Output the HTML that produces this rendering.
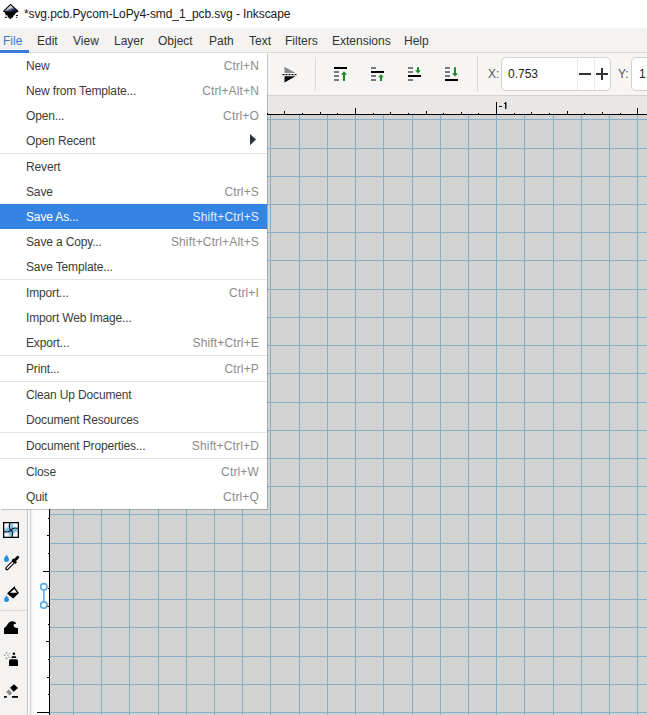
<!DOCTYPE html>
<html><head><meta charset="utf-8">
<style>
*{margin:0;padding:0;box-sizing:border-box}
html,body{width:647px;height:715px;overflow:hidden;background:#fff;font-family:"Liberation Sans",sans-serif;font-size:12px;color:#2e3436}
.a{position:absolute}
.t{position:absolute;white-space:nowrap;line-height:14px}
#title{left:0;top:0;width:647px;height:28px;background:#fff}
#menubar{left:0;top:28px;width:647px;height:25px;background:#f4f3f2;border-bottom:1px solid #dcdad7}
#toolbar{left:0;top:53px;width:647px;height:43px;background:#f6f5f4;border-bottom:1px solid #d6d3cf}
#hruler{left:50px;top:96px;width:597px;height:19px;background:#e8e7e5}
#toolbox{left:0;top:95px;width:27px;height:620px;background:#f4f3f2}
#vruler{left:30px;top:95px;width:20px;height:620px;background:#fdfdfd}
#canvas{left:50px;top:115px;width:597px;height:600px;background:#d3d2d3}
#menu{left:0;top:53px;width:267px;height:456px;background:#fff;box-shadow:1px 1px 0 rgba(0,0,0,.2)}
.mi{position:absolute;left:0;width:267px;height:25px}
.mi .l{position:absolute;left:26px;top:6px;white-space:nowrap;line-height:14px;letter-spacing:-0.15px;color:#3c3c3c}
.mi .r{position:absolute;right:8px;top:6px;white-space:nowrap;line-height:14px;color:#8c8c8c;letter-spacing:0.15px}
.sep{position:absolute;left:0;width:267px;height:1px;background:#e4e4e4}
.hl{background:#3584e4}
.hl .l{color:#fff}.hl .r{color:#e2ecfa}
</style></head><body>
<div id="title" class="a">
  <svg class="a" style="left:0;top:0" width="24" height="24" viewBox="0 0 24 24">
    <defs><linearGradient id="lg" x1="0.15" y1="0.1" x2="0.75" y2="0.95"><stop offset="0" stop-color="#fff"/><stop offset="0.4" stop-color="#c4c4d4"/><stop offset="0.7" stop-color="#2a2a58"/><stop offset="1" stop-color="#101030"/></linearGradient></defs>
    <path d="M10.5 3.8 L18.8 11.3 L15.5 13.2 L6 13.2 L2.8 11.3 Z" fill="#000"/>
    <path d="M10.5 5.3 L17 11.1 L10.5 12.3 L4.6 11.1 Z" fill="url(#lg)"/>
    <path d="M5 13 L15.5 13 L14.6 15.2 L13.4 15.6 L13 17.4 L11.6 17.8 L11 19 L9.8 19 L9.2 17.8 L7.8 17.4 L7.6 15.6 L5.6 15.2 Z" fill="#000"/>
    <rect x="4.8" y="16.8" width="2" height="1.1" fill="#111"/>
    <rect x="16" y="15" width="2" height="1" fill="#111"/>
    <rect x="16" y="16.9" width="1.2" height="1" fill="#222"/>
  </svg>
  <div class="t" style="left:24px;top:7px;color:#1a1a1a;letter-spacing:-0.1px">*svg.pcb.Pycom-LoPy4-smd_1_pcb.svg - Inkscape</div>
</div>
<div id="menubar" class="a">
  <div class="a" style="left:0;top:22px;width:29px;height:3px;background:#3a7bd5"></div>
  <div class="t" style="left:3px;top:6px;color:#3b78c4">File</div>
  <div class="t" style="left:37px;top:6px">Edit</div>
  <div class="t" style="left:73px;top:6px">View</div>
  <div class="t" style="left:114px;top:6px">Layer</div>
  <div class="t" style="left:158px;top:6px">Object</div>
  <div class="t" style="left:209px;top:6px">Path</div>
  <div class="t" style="left:249px;top:6px">Text</div>
  <div class="t" style="left:285px;top:6px">Filters</div>
  <div class="t" style="left:332px;top:6px">Extensions</div>
  <div class="t" style="left:404px;top:6px">Help</div>
</div>
<div id="toolbar" class="a">
  <svg class="a" style="left:281px;top:13px" width="18" height="18" viewBox="0 0 18 18">
    <path d="M3.5 0.8 L14.5 7 L3.5 7 Z" fill="#8c8c8c"/>
    <rect x="1.5" y="8" width="2" height="1.2" fill="#000"/><rect x="4.5" y="8" width="2" height="1.2" fill="#000"/><rect x="7.5" y="8" width="2" height="1.2" fill="#000"/><rect x="10.5" y="8" width="2" height="1.2" fill="#000"/><rect x="13.5" y="8" width="2" height="1.2" fill="#000"/>
    <path d="M3.5 10.2 L14.5 10.2 L3.5 16.4 Z" fill="#000"/>
  </svg>
  <div class="a" style="left:315px;top:4px;width:1px;height:34px;background:#dcdad6"></div>
  <svg class="a" style="left:333px;top:13px" width="16" height="16" viewBox="0 0 16 16" shape-rendering="crispEdges">
    <rect x="1" y="1" width="13" height="2" fill="#000"/>
    <rect x="1" y="5" width="5" height="2" fill="#7a7a7a"/><rect x="1" y="9" width="5" height="2" fill="#7a7a7a"/><rect x="1" y="13" width="5" height="2" fill="#7a7a7a"/>
    <path d="M11 5.2 L14 8.8 L12 8.8 L12 15 L10 15 L10 8.8 L8 8.8 Z" fill="#1a8a2a" shape-rendering="auto"/>
  </svg>
  <svg class="a" style="left:370px;top:13px" width="16" height="16" viewBox="0 0 16 16" shape-rendering="crispEdges">
    <rect x="1" y="1" width="5" height="2" fill="#7a7a7a"/>
    <rect x="1" y="5" width="13" height="2" fill="#000"/>
    <rect x="1" y="9" width="5" height="2" fill="#7a7a7a"/><rect x="1" y="13" width="5" height="2" fill="#7a7a7a"/>
    <path d="M11 8.2 L13.8 11.2 L12 11.2 L12 15 L10 15 L10 11.2 L8.2 11.2 Z" fill="#1a8a2a" shape-rendering="auto"/>
  </svg>
  <svg class="a" style="left:407px;top:13px" width="16" height="16" viewBox="0 0 16 16" shape-rendering="crispEdges">
    <rect x="1" y="1" width="5" height="2" fill="#7a7a7a"/><rect x="1" y="5" width="5" height="2" fill="#7a7a7a"/>
    <rect x="1" y="9" width="13" height="2" fill="#000"/>
    <rect x="1" y="13" width="5" height="2" fill="#7a7a7a"/>
    <path d="M10 1.2 L12 1.2 L12 4.2 L13.8 4.2 L11 7.4 L8.2 4.2 L10 4.2 Z" fill="#1a8a2a" shape-rendering="auto"/>
  </svg>
  <svg class="a" style="left:444px;top:13px" width="16" height="16" viewBox="0 0 16 16" shape-rendering="crispEdges">
    <rect x="1" y="1" width="5" height="2" fill="#7a7a7a"/><rect x="1" y="5" width="5" height="2" fill="#7a7a7a"/><rect x="1" y="9" width="5" height="2" fill="#7a7a7a"/>
    <rect x="1" y="13" width="13" height="2" fill="#000"/>
    <path d="M10 1.2 L12 1.2 L12 7.2 L14 7.2 L11 10.6 L8 7.2 L10 7.2 Z" fill="#1a8a2a" shape-rendering="auto"/>
  </svg>
  <div class="a" style="left:477px;top:3px;width:1px;height:36px;background:#dcdad6"></div>
  <div class="t" style="left:488px;top:14px;color:#555">X:</div>
  <div class="a" style="left:501px;top:4px;width:110px;height:34px;background:#fff;border:1px solid #d5d2ce;border-radius:5px"></div>
  <div class="a" style="left:577px;top:5px;width:1px;height:32px;background:#ebeae8"></div>
  <div class="a" style="left:594px;top:5px;width:1px;height:32px;background:#ebeae8"></div>
  <div class="t" style="left:508px;top:14px;color:#222">0.753</div>
  <div class="a" style="left:579px;top:20px;width:12px;height:2px;background:#333"></div>
  <div class="a" style="left:596px;top:20px;width:12px;height:2px;background:#333"></div>
  <div class="a" style="left:601px;top:15px;width:2px;height:12px;background:#333"></div>
  <div class="t" style="left:618px;top:14px;color:#555">Y:</div>
  <div class="a" style="left:631px;top:4px;width:40px;height:34px;background:#fff;border:1px solid #d5d2ce;border-radius:5px"></div>
  <div class="t" style="left:639px;top:14px;color:#222">1.</div>
</div>
<div id="hruler" class="a"></div>
<svg class="a" style="left:50px;top:95px" width="597" height="20" shape-rendering="crispEdges"><g fill="#000"><rect x="5" y="18" width="1" height="1"/><rect x="23" y="13" width="1" height="6"/><rect x="40" y="18" width="1" height="1"/><rect x="58" y="17" width="1" height="2"/><rect x="75" y="18" width="1" height="1"/><rect x="93" y="16" width="1" height="3"/><rect x="111" y="18" width="1" height="1"/><rect x="128" y="17" width="1" height="2"/><rect x="146" y="18" width="1" height="1"/><rect x="164" y="7" width="1" height="12"/><rect x="181" y="18" width="1" height="1"/><rect x="199" y="17" width="1" height="2"/><rect x="217" y="18" width="1" height="1"/><rect x="234" y="16" width="1" height="3"/><rect x="252" y="18" width="1" height="1"/><rect x="270" y="17" width="1" height="2"/><rect x="287" y="18" width="1" height="1"/><rect x="305" y="13" width="1" height="6"/><rect x="323" y="18" width="1" height="1"/><rect x="340" y="17" width="1" height="2"/><rect x="358" y="18" width="1" height="1"/><rect x="376" y="16" width="1" height="3"/><rect x="393" y="18" width="1" height="1"/><rect x="411" y="17" width="1" height="2"/><rect x="428" y="18" width="1" height="1"/><rect x="446" y="7" width="1" height="12"/><rect x="464" y="18" width="1" height="1"/><rect x="481" y="17" width="1" height="2"/><rect x="499" y="18" width="1" height="1"/><rect x="517" y="16" width="1" height="3"/><rect x="534" y="18" width="1" height="1"/><rect x="552" y="17" width="1" height="2"/><rect x="570" y="18" width="1" height="1"/><rect x="587" y="13" width="1" height="6"/><rect x="0" y="19" width="597" height="1"/></g></svg>
<div id="toolbox" class="a">
  <div class="a" style="left:0;top:515px;width:27px;height:1px;background:#dedcd9"></div>
  <svg class="a" style="left:3px;top:427px" width="16" height="16" viewBox="0 0 16 16">
    <defs><filter id="bl" x="-0.5" y="-0.5" width="2" height="2"><feGaussianBlur stdDeviation="0.9"/></filter></defs>
    <rect x="0.65" y="0.65" width="14.7" height="14.7" fill="#fff"/>
    <g fill="#3e9fd6" opacity="0.85" filter="url(#bl)">
      <path d="M7 1.5 C6 4, 6.3 6.5, 8 7.8 L10.5 5.5 C10 3.5, 9.5 2, 9 1.5 Z"/>
      <path d="M14.5 6.8 C12 5.8, 9.5 6.2, 8 7.8 L10.5 10.5 C12.5 10, 14 9.5, 14.5 9 Z"/>
      <path d="M8.6 14.5 C9.8 12, 9.6 9.5, 8 7.8 L5.5 10.5 C6 12.5, 6.5 14, 7 14.5 Z"/>
      <path d="M1.5 9.2 C4 10.2, 6.5 9.8, 8 7.8 L5.5 5.5 C3.5 6, 2 6.5, 1.5 7 Z"/>
    </g>
    <rect x="0.65" y="0.65" width="14.7" height="14.7" fill="none" stroke="#000" stroke-width="1.3"/>
    <g fill="none" stroke="#06121e" stroke-width="1.1">
      <path d="M7 1 C5.8 4, 6.5 7, 8 8"/><path d="M15 6.5 C12 5.5, 9.3 6.5, 8 8"/>
      <path d="M8.8 15 C10 12, 9.6 9.3, 8 8"/><path d="M1 9.5 C4 10.5, 6.8 9.6, 8 8"/>
    </g>
  </svg>
  <svg class="a" style="left:0;top:455px" width="24" height="25" viewBox="0 0 24 25">
    <path d="M6.5 4.8 C7.3 6.3, 9 7.6, 9 9.6 A2.5 2.5 0 0 1 4 9.6 C4 7.6, 5.7 6.3, 6.5 4.8 Z" fill="#1e90dc"/>
    <path d="M14.6 10.4 L17.8 7.2" stroke="#000" stroke-width="2.8" stroke-linecap="round"/>
    <path d="M12.4 9.4 L16.2 13.2" stroke="#000" stroke-width="2.4"/>
    <path d="M13.4 12 L7 18.4" stroke="#000" stroke-width="3.6" stroke-linecap="round"/>
    <path d="M12.6 12.8 L7.2 18.2" stroke="#fff" stroke-width="1.5" stroke-linecap="round"/>
  </svg>
  <svg class="a" style="left:0;top:485px" width="24" height="26" viewBox="0 0 24 26">
    <path d="M7 13.5 L14.2 6.6 L18.9 12.9 L13.2 18.4 Z" fill="#000"/>
    <path d="M14.2 5.8 L15 6.5 L14 7.5 Z" fill="#000"/>
    <path d="M10.2 12.7 L14.2 8.9 L17.1 12.7 Z" fill="#fff"/>
    <path d="M6.5 15.2 C7.3 16.8, 9 18, 9 19.6 A2.5 2.5 0 0 1 4 19.6 C4 18, 5.7 16.8, 6.5 15.2 Z" fill="#1e90dc"/>
  </svg>
  <svg class="a" style="left:0;top:519px" width="24" height="26" viewBox="0 0 24 26">
    <path d="M4 20 L4 14 C6 13.5, 7 11, 8.5 9 C10 7.2, 13 6.8, 15 8 C16 8.6, 16.3 9.5, 15.8 10 C14.5 9.5, 13.3 10.5, 13.7 12 C14 13.5, 16 14, 18 14 L18 20 Z" fill="#000"/>
  </svg>
  <svg class="a" style="left:0;top:551px" width="24" height="26" viewBox="0 0 24 26">
    <path d="M9 20 L9 14.8 Q9 13.2 10.6 13.2 L16.4 13.2 Q18 13.2 18 14.8 L18 20 Z" fill="#000"/>
    <path d="M11.3 12 L11.8 10.2 L15.8 10.2 L16.4 12 Z" fill="#000"/>
    <circle cx="13.9" cy="7.8" r="1.3" fill="#000"/>
    <g fill="#888"><circle cx="6.5" cy="6.8" r="0.8"/><circle cx="4.8" cy="9.3" r="0.8"/><circle cx="6.5" cy="12.3" r="0.9"/><circle cx="9.5" cy="7.5" r="0.6"/><circle cx="8" cy="9.2" r="0.6"/><circle cx="9" cy="11.2" r="0.6"/></g>
  </svg>
  <svg class="a" style="left:0;top:583px" width="24" height="26" viewBox="0 0 24 26">
    <path d="M14 6.2 L18 10 L13.6 13.8 L10 9.8 Z" fill="#000"/>
    <path d="M8.8 11.5 L12.2 15 L9.6 17.5 L6.2 14 Z" fill="#8a8a8a"/>
    <rect x="4" y="18" width="2.8" height="1.8" fill="#000"/>
    <rect x="12" y="18" width="6" height="1.8" fill="#000"/>
  </svg>
</div>
<svg class="a" style="left:498px;top:101px" width="12" height="10" shape-rendering="crispEdges">
  <rect x="1" y="5" width="3" height="1" fill="#111"/><rect x="7" y="1" width="1" height="7" fill="#111"/><rect x="8" y="1" width="1" height="7" fill="#888"/><rect x="6" y="2" width="1" height="1" fill="#222"/>
</svg>
<div id="vruler" class="a"></div>
<div class="a" style="left:27px;top:95px;width:1px;height:620px;background:#cac9c8"></div>
<div class="a" style="left:28px;top:95px;width:2px;height:620px;background:#f8f7f6"></div>
<div class="a" style="left:30px;top:95px;width:1px;height:620px;background:#d8d8d8"></div>
<div class="a" style="left:31px;top:95px;width:1px;height:620px;background:#eeeeee"></div>
<div class="a" style="left:32px;top:95px;width:1px;height:620px;background:#f8f8f8"></div>
<svg class="a" style="left:31px;top:96px" width="19" height="619" shape-rendering="crispEdges"><g fill="#000"><rect x="6" y="616" width="12" height="1"/><rect x="17" y="598" width="1" height="1"/><rect x="16" y="581" width="2" height="1"/><rect x="17" y="563" width="1" height="1"/><rect x="15" y="545" width="3" height="1"/><rect x="17" y="528" width="1" height="1"/><rect x="16" y="510" width="2" height="1"/><rect x="17" y="492" width="1" height="1"/><rect x="12" y="475" width="6" height="1"/><rect x="17" y="457" width="1" height="1"/><rect x="16" y="439" width="2" height="1"/><rect x="17" y="422" width="1" height="1"/><rect x="15" y="404" width="3" height="1"/><rect x="17" y="386" width="1" height="1"/><rect x="16" y="369" width="2" height="1"/><rect x="17" y="351" width="1" height="1"/><rect x="6" y="333" width="12" height="1"/><rect x="17" y="316" width="1" height="1"/><rect x="16" y="298" width="2" height="1"/><rect x="17" y="280" width="1" height="1"/><rect x="15" y="263" width="3" height="1"/><rect x="17" y="245" width="1" height="1"/><rect x="16" y="228" width="2" height="1"/><rect x="17" y="210" width="1" height="1"/><rect x="12" y="192" width="6" height="1"/><rect x="17" y="175" width="1" height="1"/><rect x="16" y="157" width="2" height="1"/><rect x="17" y="139" width="1" height="1"/><rect x="15" y="122" width="3" height="1"/><rect x="17" y="104" width="1" height="1"/><rect x="16" y="86" width="2" height="1"/><rect x="17" y="69" width="1" height="1"/><rect x="6" y="51" width="12" height="1"/><rect x="17" y="33" width="1" height="1"/><rect x="16" y="16" width="2" height="1"/><rect x="18" y="0" width="1" height="619"/></g></svg>
<svg class="a" style="left:38px;top:581px" width="12" height="30" viewBox="0 0 12 30">
  <path d="M5.8 9 L5.8 21" stroke="#5aaae0" stroke-width="1.5"/>
  <circle cx="5.8" cy="5.8" r="3.2" fill="#fff" stroke="#5aaae0" stroke-width="1.6"/>
  <circle cx="5.8" cy="24.1" r="3.2" fill="#fff" stroke="#5aaae0" stroke-width="1.6"/>
</svg>
<div id="canvas" class="a"></div>
<svg class="a" style="left:50px;top:115px" width="597" height="600" shape-rendering="crispEdges"><g fill="#84b0c7"><rect x="23" y="0" width="1" height="600"/><rect x="51" y="0" width="1" height="600"/><rect x="79" y="0" width="1" height="600"/><rect x="108" y="0" width="1" height="600"/><rect x="136" y="0" width="1" height="600"/><rect x="164" y="0" width="1" height="600"/><rect x="192" y="0" width="1" height="600"/><rect x="220" y="0" width="1" height="600"/><rect x="249" y="0" width="1" height="600"/><rect x="277" y="0" width="1" height="600"/><rect x="305" y="0" width="1" height="600"/><rect x="333" y="0" width="1" height="600"/><rect x="362" y="0" width="1" height="600"/><rect x="390" y="0" width="1" height="600"/><rect x="418" y="0" width="1" height="600"/><rect x="446" y="0" width="1" height="600"/><rect x="474" y="0" width="1" height="600"/><rect x="503" y="0" width="1" height="600"/><rect x="531" y="0" width="1" height="600"/><rect x="559" y="0" width="1" height="600"/><rect x="587" y="0" width="1" height="600"/><rect x="0" y="4" width="597" height="1"/><rect x="0" y="33" width="597" height="1"/><rect x="0" y="61" width="597" height="1"/><rect x="0" y="89" width="597" height="1"/><rect x="0" y="117" width="597" height="1"/><rect x="0" y="145" width="597" height="1"/><rect x="0" y="174" width="597" height="1"/><rect x="0" y="202" width="597" height="1"/><rect x="0" y="230" width="597" height="1"/><rect x="0" y="258" width="597" height="1"/><rect x="0" y="287" width="597" height="1"/><rect x="0" y="315" width="597" height="1"/><rect x="0" y="343" width="597" height="1"/><rect x="0" y="371" width="597" height="1"/><rect x="0" y="399" width="597" height="1"/><rect x="0" y="428" width="597" height="1"/><rect x="0" y="456" width="597" height="1"/><rect x="0" y="484" width="597" height="1"/><rect x="0" y="512" width="597" height="1"/><rect x="0" y="541" width="597" height="1"/><rect x="0" y="569" width="597" height="1"/><rect x="0" y="597" width="597" height="1"/></g></svg>
<div id="menu" class="a">
  <div class="mi" style="top:0px"><span class="l">New</span><span class="r">Ctrl+N</span></div>
  <div class="mi" style="top:25px"><span class="l">New from Template...</span><span class="r">Ctrl+Alt+N</span></div>
  <div class="mi" style="top:50px"><span class="l">Open...</span><span class="r">Ctrl+O</span></div>
  <div class="mi" style="top:75px"><span class="l">Open Recent</span><svg class="a" style="left:249px;top:6px" width="8" height="12" viewBox="0 0 8 12"><path d="M1 0 L7 5.6 L1 11.2 Z" fill="#2e3436"/></svg></div>
  <div class="sep" style="top:100px"></div>
  <div class="mi" style="top:101px"><span class="l">Revert</span></div>
  <div class="mi" style="top:126px"><span class="l">Save</span><span class="r">Ctrl+S</span></div>
  <div class="mi hl" style="top:151px"><span class="l">Save As...</span><span class="r">Shift+Ctrl+S</span></div>
  <div class="mi" style="top:176px"><span class="l">Save a Copy...</span><span class="r">Shift+Ctrl+Alt+S</span></div>
  <div class="mi" style="top:201px"><span class="l">Save Template...</span></div>
  <div class="sep" style="top:226px"></div>
  <div class="mi" style="top:227px"><span class="l">Import...</span><span class="r">Ctrl+I</span></div>
  <div class="mi" style="top:252px"><span class="l">Import Web Image...</span></div>
  <div class="mi" style="top:277px"><span class="l">Export...</span><span class="r">Shift+Ctrl+E</span></div>
  <div class="sep" style="top:302px"></div>
  <div class="mi" style="top:303px"><span class="l">Print...</span><span class="r">Ctrl+P</span></div>
  <div class="sep" style="top:328px"></div>
  <div class="mi" style="top:329px"><span class="l">Clean Up Document</span></div>
  <div class="mi" style="top:354px"><span class="l">Document Resources</span></div>
  <div class="sep" style="top:379px"></div>
  <div class="mi" style="top:380px"><span class="l">Document Properties...</span><span class="r">Shift+Ctrl+D</span></div>
  <div class="sep" style="top:405px"></div>
  <div class="mi" style="top:406px"><span class="l">Close</span><span class="r">Ctrl+W</span></div>
  <div class="mi" style="top:431px"><span class="l">Quit</span><span class="r">Ctrl+Q</span></div>
</div>
</body></html>
